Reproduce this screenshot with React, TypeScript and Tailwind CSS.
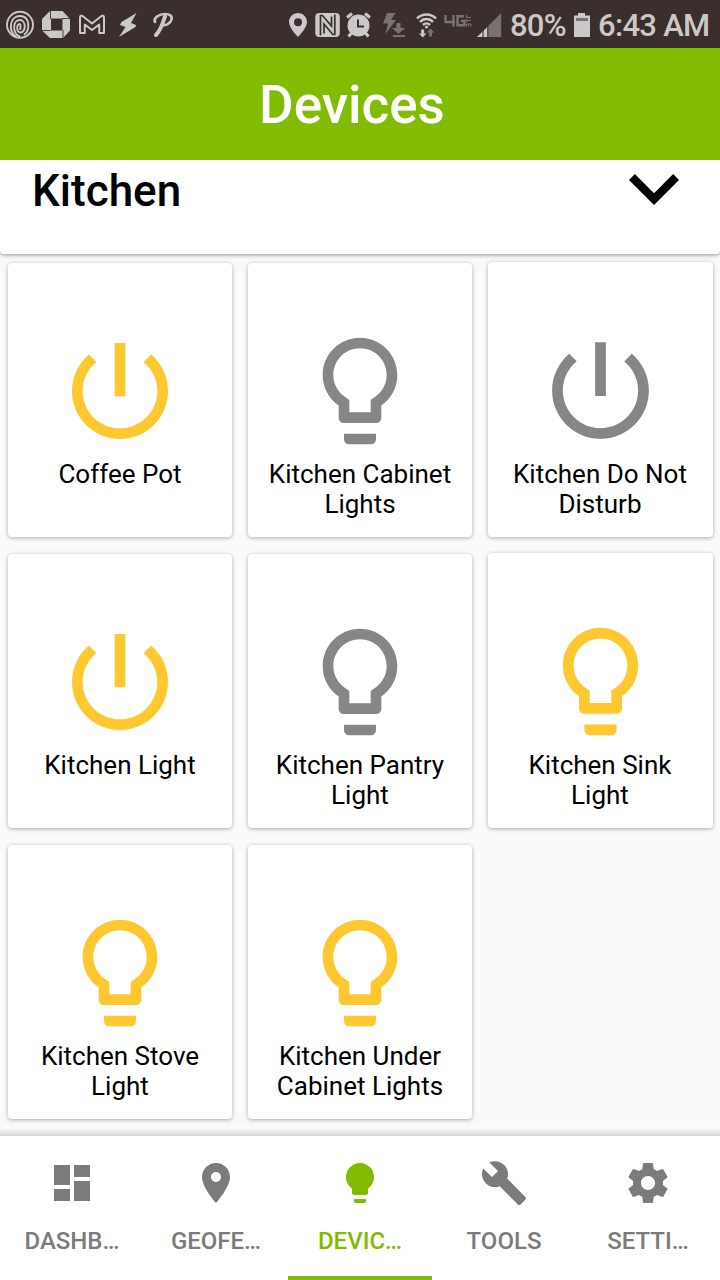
import type { ReactNode } from "react";

const POWER =
  "M13 3h-2v10h2V3zm4.83 2.17l-1.42 1.42C17.99 7.86 19 9.81 19 12c0 3.87-3.13 7-7 7s-7-3.13-7-7c0-2.19 1.01-4.14 2.58-5.42L6.17 5.17C4.23 6.82 3 9.26 3 12c0 4.97 4.03 9 9 9s9-4.03 9-9c0-2.74-1.23-5.18-3.17-6.83z";
const BULB =
  "M9 21c0 .55.45 1 1 1h4c.55 0 1-.45 1-1v-1H9v1zm3-19C8.14 2 5 5.14 5 9c0 2.38 1.19 4.47 3 5.74V17c0 .55.45 1 1 1h6c.55 0 1-.45 1-1v-2.26c1.81-1.27 3-3.36 3-5.74 0-3.86-3.14-7-7-7zm2.85 11.1l-.85.6V16h-4v-2.3l-.85-.6C7.8 12.16 7 10.63 7 9c0-2.76 2.24-5 5-5s5 2.24 5 5c0 1.63-.8 3.16-2.15 4.1z";

type Device = { name: string; icon: string; on: boolean };

const devices: Device[] = [
  { name: "Coffee Pot", icon: POWER, on: true },
  { name: "Kitchen Cabinet Lights", icon: BULB, on: false },
  { name: "Kitchen Do Not Disturb", icon: POWER, on: false },
  { name: "Kitchen Light", icon: POWER, on: true },
  { name: "Kitchen Pantry Light", icon: BULB, on: false },
  { name: "Kitchen Sink Light", icon: BULB, on: true },
  { name: "Kitchen Stove Light", icon: BULB, on: true },
  { name: "Kitchen Under Cabinet Lights", icon: BULB, on: true },
];

const tabs = [
  { label: "DASHB…", icon: "M3 13h8V3H3v10zm0 8h8v-6H3v6zm10 0h8V11h-8v10zm0-18v6h8V3h-8z" },
  {
    label: "GEOFE…",
    icon: "M12 2C8.13 2 5 5.13 5 9c0 5.25 7 13 7 13s7-7.75 7-13c0-3.87-3.13-7-7-7zm0 9.5c-1.38 0-2.5-1.12-2.5-2.5s1.12-2.5 2.5-2.5 2.5 1.12 2.5 2.5-1.12 2.5-2.5 2.5z",
  },
  {
    label: "DEVIC…",
    active: true,
    icon: "M9 21c0 .55.45 1 1 1h4c.55 0 1-.45 1-1v-1H9v1zm3-19C8.14 2 5 5.14 5 9c0 2.38 1.19 4.47 3 5.74V17c0 .55.45 1 1 1h6c.55 0 1-.45 1-1v-2.26c1.81-1.27 3-3.36 3-5.74 0-3.86-3.14-7-7-7z",
  },
  {
    label: "TOOLS",
    icon: "M22.7 19l-9.1-9.1c.9-2.3.4-5-1.5-6.9-2-2-5-2.4-7.4-1.3L9 6 6 9 1.6 4.7C.4 7.1.9 10.1 2.9 12.1c1.9 1.9 4.6 2.4 6.9 1.5l9.1 9.1c.4.4 1 .4 1.4 0l2.3-2.3c.5-.4.5-1.1.1-1.4z",
  },
  {
    label: "SETTI…",
    icon: "M19.43 12.98c.04-.32.07-.64.07-.98s-.03-.66-.07-.98l2.11-1.65c.19-.15.24-.42.12-.64l-2-3.46c-.12-.22-.39-.3-.61-.22l-2.49 1c-.52-.4-1.08-.73-1.69-.98l-.38-2.65C14.46 2.18 14.25 2 14 2h-4c-.25 0-.46.18-.49.42l-.38 2.65c-.61.25-1.17.59-1.69.98l-2.49-1c-.23-.09-.49 0-.61.22l-2 3.46c-.13.22-.07.49.12.64l2.11 1.65c-.04.32-.07.65-.07.98s.03.66.07.98l-2.11 1.65c-.19.15-.24.42-.12.64l2 3.46c.12.22.39.3.61.22l2.49-1c.52.4 1.08.73 1.69.98l.38 2.65c.03.24.24.42.49.42h4c.25 0 .46-.18.49-.42l.38-2.65c.61-.25 1.17-.59 1.69-.98l2.49 1c.23.09.49 0 .61-.22l2-3.46c.12-.22.07-.49-.12-.64l-2.11-1.65zM12 15.5c-1.93 0-3.5-1.57-3.5-3.5s1.57-3.5 3.5-3.5 3.5 1.57 3.5 3.5-1.57 3.5-3.5 3.5z",
  },
];

/* Status icons share one coordinate space; each glyph shows its own slice of the bar. */
function Glyph({ from, to, children }: { from: number; to: number; children: ReactNode }) {
  return (
    <svg width={to - from} height={48} viewBox={`${from} 0 ${to - from} 48`} className="shrink-0" fill="currentColor">
      {children}
    </svg>
  );
}

function StatusBar() {
  return (
    <header className="flex h-12 shrink-0 items-center overflow-hidden bg-[#3a2f2d] whitespace-nowrap text-[#cbc9c8]">
      <Glyph from={0} to={38}>
        <g fill="none" stroke="currentColor" strokeWidth="1.900">
          <circle cx="20" cy="24.800" r="13" />
          <path d="M16.500 36.500C8 33 9 16 20 16c10 0 10.500 14 4 19" />
          <path d="M20 36.500c-8-3-7.500-16.500-.3-16.500 6.800 0 6.300 12.500 1 12.500-4.500 0-4.500-8.500-1-8.500 1 0 1 3 .5 6" />
        </g>
      </Glyph>
      <Glyph from={38} to={74}>
        <path fillRule="evenodd" d="M50 11h12.500l7.500 8v11.500l-7 7.500H50l-8-7.500V19zM51 18.500v12h11.500v-12z" />
        <path d="M50.500 11v8M62 18.500h8M63 30v8M42 30.500h8.500" stroke="#3a2f2d" strokeWidth="0.900" />
      </Glyph>
      <Glyph from={74} to={110}>
        <path
          d="M80 33V17.500c0-2 1.500-2.300 2.800-1.300L92 23.500l9.200-7.300c1.300-1 2.800-.7 2.800 1.300V33h-4.800v-8.500L92 30l-7.200-5.500V33z"
          fill="none"
          stroke="currentColor"
          strokeWidth="2"
          strokeLinejoin="round"
        />
      </Glyph>
      <Glyph from={110} to={146}>
        <path d="M136.500 13L121.500 22l-1.500 3 5.500 2-6.500 10L135.500 27l.5-2-5-2z" />
      </Glyph>
      <Glyph from={146} to={284}>
        <path d="M155 22c-2-4 4-8 10-8 5 0 7.500 2 6.500 5.500-1 4-6 6.500-9.500 5.500" fill="none" stroke="currentColor" strokeWidth="2.600" strokeLinecap="round" />
        <path d="M165 16.500c-2.500 8-4.500 14-9 18.500" fill="none" stroke="currentColor" strokeWidth="4" strokeLinecap="round" />
      </Glyph>
      <Glyph from={284} to={312}>
        <path fillRule="evenodd" d="M298 13c-5 0-9 4-9 9 0 6 9 15 9 15s9-9 9-15c0-5-4-9-9-9zm0 5.200a4 4 0 1 1 0 8 4 4 0 0 1 0-8z" />
      </Glyph>
      <Glyph from={312} to={344}>
        <rect x="315.300" y="13" width="24.500" height="24" rx="4" />
        <g fill="none" stroke="#3a2f2d" strokeWidth="1.700">
          <path d="M320.500 35.500V15.500h2L331.500 26V16.500" />
          <path d="M334.800 14.500v20h-2L324 24v9.500" />
        </g>
      </Glyph>
      <Glyph from={344} to={376}>
        <circle cx="358.500" cy="25.500" r="11" />
        <path d="M347 17.500l5-4M370 17.500l-5-4M351.500 33l-3 3.500M365.500 33l3 3.500" stroke="currentColor" strokeWidth="3" />
        <path d="M358 19.500v7h6" fill="none" stroke="#3a2f2d" strokeWidth="2" />
      </Glyph>
      <Glyph from={376} to={410}>
        <g fill="#7a7270">
          <path d="M387 13h8.500l-4.500 7h5l-10.500 14 2.500-10.500H383z" />
          <path d="M396.500 23h4v5h4.500l-6.500 6-6.500-6h4.500zM393 35h12v2h-12z" />
        </g>
      </Glyph>
      <Glyph from={410} to={440}>
        <g fill="none" stroke="currentColor" strokeWidth="2.500">
          <path d="M417 18.500c5-5.500 14-5.500 19 0M420 22c3.500-4 9.500-4 13 0M423 25c2-2 5-2 7 0" />
        </g>
        <circle cx="426.500" cy="27" r="1.500" />
        <path d="M421.200 29.500h3v4h2.300l-3.800 4-3.800-4h2.300z" />
        <path fill="#7a7270" d="M429 36.500h3v-4h2.300l-3.800-4-3.800 4h2.300z" />
      </Glyph>
      <Glyph from={440} to={474}>
        <g fill="none" stroke="#7a7270">
          <path d="M445.500 15v7h9.500M453.500 15v11.500M464 16.200h-6.500v9.100h7v-4.300H461" strokeWidth="2.400" />
          <path d="M466.500 15v2.500h4.500M466.500 20.500h4.500M466.500 19v3M466.500 26.500V24h4.500v2.500M468.700 24v2.500" strokeWidth="1" />
        </g>
      </Glyph>
      <Glyph from={474} to={510}>
        <path fill="#7a7270" d="M501.200 13v24h-24z" />
        <path d="M488 26.500V37h-11z" />
        <path d="M483 29v8M487.800 25v12" stroke="#3a2f2d" strokeWidth="1.100" />
      </Glyph>
      <span className="w-[60px] pt-[3px] text-[31px] leading-[48px] font-medium tracking-[-0.800px]">80%</span>
      <Glyph from={570} to={598}>
        <path fillRule="evenodd" d="M578 13h7v2.500h5V37h-16V15.500h4zM576 18v3h12v-3z" />
        <path fill="#7a7270" d="M576 18h12v3h-12z" />
      </Glyph>
      <span className="pt-[3px] text-[31px] leading-[48px] font-medium tracking-[-0.700px]">6:43 AM</span>
    </header>
  );
}

function DeviceCard({ device, last }: { device: Device; last: boolean }) {
  return (
    <article
      className={
        last
          ? "-mt-px flex h-[275px] w-[225px] flex-col items-center rounded-[4px] bg-white pt-16 shadow-[0_1px_4px_rgba(0,0,0,0.320)]"
          : "flex h-[274px] w-[224px] flex-col items-center rounded-[4px] bg-white pt-16 shadow-[0_1px_4px_rgba(0,0,0,0.320)]"
      }
    >
      <svg
        viewBox="0 0 24 24"
        className={`${last ? "mr-px size-[129px]" : "size-32"} ${device.on ? "text-[#ffc82e]" : "text-[#868686]"} shrink-0`}
        fill="currentColor"
      >
        <path d={device.icon} />
      </svg>
      <p className={`${last ? "mr-px" : ""} mt-1 w-[192px] text-center text-[26px] leading-[30px] text-black`}>{device.name}</p>
    </article>
  );
}

export default function App() {
  return (
    <div className="flex h-[1280px] w-[720px] flex-col overflow-hidden bg-[#fafafa] font-['Roboto',sans-serif]">
      <StatusBar />
      <h1 className="z-10 flex h-28 shrink-0 items-center justify-center bg-[#81bc00] pt-1 pr-4 text-[53px] font-medium text-white">
        Devices
      </h1>
      <section className="flex h-[94px] shrink-0 items-start justify-between rounded-b-[4px] bg-white pr-[41px] pl-8 shadow-[0_1px_4px_rgba(0,0,0,0.400)]">
        <h2 className="pt-[5px] text-[44px] leading-[52px] font-medium text-black">Kitchen</h2>
        <svg viewBox="6 8.590 12 7.410" preserveAspectRatio="none" className="mt-[14px] h-[31px] w-[50px]">
          <path d="M16.590 8.590L12 13.170 7.410 8.590 6 10l6 6 6-6z" />
        </svg>
      </section>
      <main className="grid shrink-0 auto-rows-[274px] grid-cols-[224px_224px_225px] gap-x-4 gap-y-[17px] px-2 pt-[9px]">
        {devices.map((device, i) => (
          <DeviceCard key={device.name} device={device} last={i % 3 === 2} />
        ))}
      </main>
      <div className="mt-2 h-[9px] shrink-0 rounded-t-[4px] bg-linear-to-b from-white to-[#d6d6d6]" />
      <nav className="grid h-36 shrink-0 grid-cols-5 bg-white">
        {tabs.map((tab) => (
          <div
            key={tab.label}
            className={
              tab.active
                ? "flex flex-col items-center border-b-4 border-[#81bc00] pt-[23px] text-[#81bc00]"
                : "flex flex-col items-center border-b-4 border-transparent pt-[23px] text-[#7b7b7b]"
            }
          >
            <svg viewBox="0 0 24 24" className="size-12" fill="currentColor">
              <path d={tab.icon} />
            </svg>
            <span className="mt-5 text-2xl leading-7 font-medium">{tab.label}</span>
          </div>
        ))}
      </nav>
    </div>
  );
}
